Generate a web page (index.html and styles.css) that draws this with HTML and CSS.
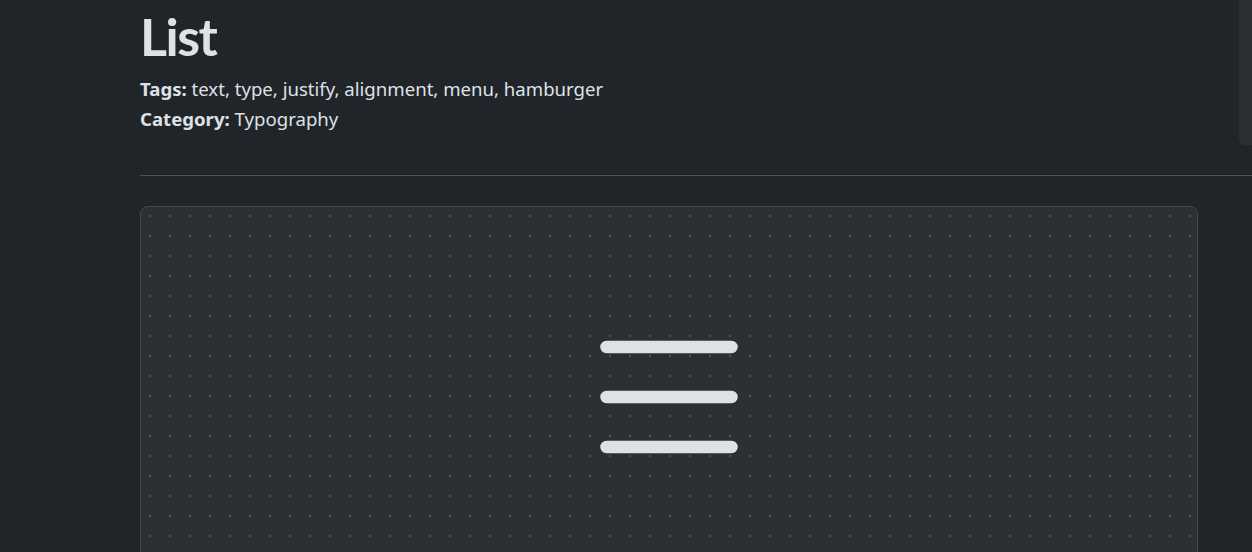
FILE: index.html
```html
<!DOCTYPE html>
<html lang="en">
<head>
<meta charset="utf-8">
<title>List</title>
<link rel="stylesheet" href="styles.css">
</head>
<body>
<div class="side-panel"></div>
<main class="page">
  <header class="head">
    <h1 class="title">List</h1>
    <p class="meta"><strong>Tags:</strong> text, type, justify, alignment, menu, hamburger</p>
    <p class="meta"><strong>Category:</strong> Typography</p>
  </header>
  <hr class="rule">
  <section class="preview">
    <svg class="icon" viewBox="0 0 16 16" width="200" height="200" fill="#dee2e6" aria-hidden="true">
      <path fill-rule="evenodd" d="M2.5 12a.5.5 0 0 1 .5-.5h10a.5.5 0 0 1 0 1H3a.5.5 0 0 1-.5-.5m0-4a.5.5 0 0 1 .5-.5h10a.5.5 0 0 1 0 1H3a.5.5 0 0 1-.5-.5m0-4a.5.5 0 0 1 .5-.5h10a.5.5 0 0 1 0 1H3a.5.5 0 0 1-.5-.5"/>
    </svg>
  </section>
</main>
</body>
</html>
```
FILE: styles.css
```css
html, body {
  margin: 0;
  padding: 0;
  background: #212529;
  color: #dee2e6;
  font-family: "Noto Sans", "Open Sans", sans-serif;
  overflow: hidden;
}
.page {
  padding-left: 140px;
  height: 552px;
  overflow: hidden;
}
.title {
  margin: 5px 0 7px 0;
  font-family: Lato, "Noto Sans", sans-serif;
  font-size: 52px;
  font-weight: 700;
  line-height: 62px;
  letter-spacing: -1.5px;
}
.meta {
  margin: 0;
  font-size: 18.6px;
  line-height: 30px;
}
.meta strong {
  font-weight: 700;
}
.rule {
  margin: 41px 0 30px 0;
  border: 0;
  border-top: 1px solid #505458;
  height: 0;
}
.preview {
  width: 1056px;
  height: 380px;
  box-sizing: content-box;
  border: 1px solid #43484e;
  border-radius: 8px;
  background-color: #2b3035;
  background-image: radial-gradient(circle at 10px 10px, #4d5257 1px, transparent 1.3px);
  background-size: 20px 20px;
  background-position: -1px -1px;
  display: flex;
  justify-content: center;
  align-items: center;
}
.icon {
  display: block;
}
.side-panel {
  position: absolute;
  top: 0;
  right: 0;
  width: 13px;
  height: 145px;
  background: #2b3035;
  border-bottom-left-radius: 6px;
}
```
